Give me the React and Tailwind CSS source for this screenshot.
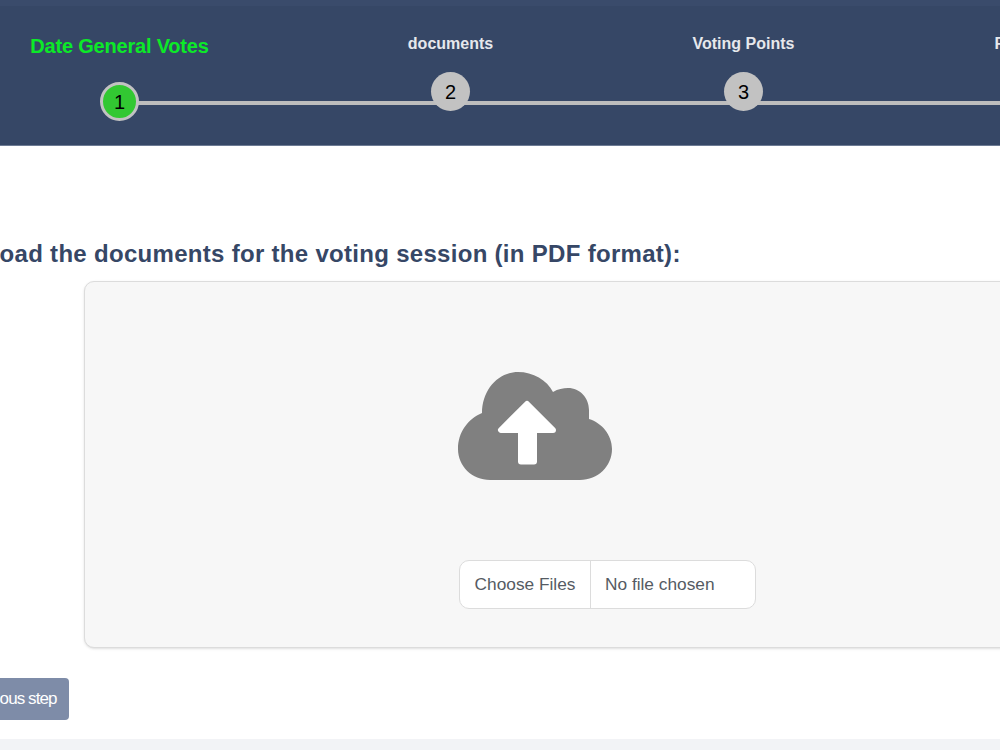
import React from 'react';

const steps = [
  { n: 2, label: 'documents' },
  { n: 3, label: 'Voting Points' },
  { n: 4, label: 'Final Votes' },
];

const CloudIcon = () => (
  <svg width="154" height="108" viewBox="0 0 154 108" aria-hidden="true">
    <path
      fill="#808080"
      d="M32 108C14 108 0 94 0 77C0 60 10 47 24 41C24 18 40 0 60 0C75 0 89 8 95 20C100 17 105 16 110 16C122 16 131 26 131 38L131 47C144 51 154 63 154 77C154 94 140 108 122 108Z"
    />
    <path
      fill="#ffffff"
      stroke="#ffffff"
      strokeWidth="6"
      strokeLinejoin="round"
      d="M69 32L43 58L63 58L63 89.5L76 89.5L76 58L95 58Z"
    />
  </svg>
);

const App = () => {
  return (
    <div className="w-[1000px] h-[750px] overflow-hidden bg-white font-['Liberation_Sans',Arial,sans-serif]">
      <header className="relative h-[146px] bg-[#364766] border-t-[6px] border-[#3a4b6b] border-b border-b-[#6d7b94]">
        <div className="absolute left-[120px] top-[95px] h-1 w-[880px] bg-[#bdbdbd]"></div>
        <div className="relative flex w-[1300px]">
          <div className="flex w-[304px] shrink-0 flex-col items-center">
            <div className="-ml-[65px] flex flex-col items-center">
              <span className="mt-[28px] text-[20px] leading-6 font-bold tracking-[-0.2px] text-[#0ce928]">
                Date General Votes
              </span>
              <span className="mt-[24px] flex h-[39px] w-[39px] items-center justify-center rounded-full border-[3px] border-[#c2c2c2] bg-[#32c832] text-[20px] text-black">
                1
              </span>
            </div>
          </div>
          {steps.map((step) => (
            <div key={step.n} className="flex w-[293px] shrink-0 flex-col items-center">
              <span className="mt-[28px] text-[16px] leading-5 font-bold text-[#e6e8ec]">{step.label}</span>
              <span className="mt-[18px] flex h-[39px] w-[39px] items-center justify-center rounded-full bg-[#c2c2c2] text-[20px] text-black">
                {step.n}
              </span>
            </div>
          ))}
        </div>
      </header>

      <main>
        <h2 className="mt-[94px] -ml-[40px] whitespace-nowrap text-[24px] leading-7 font-bold tracking-[0.3px] text-[#364766]">
          Upload the documents for the voting session (in PDF format):
        </h2>
        <div className="mt-[13px] ml-[84px] h-[367px] w-[1000px] rounded-[10px] border border-[#dcdcdc] bg-[#f7f7f7] shadow-sm">
          <div className="flex w-[900px] flex-col items-center pt-[90px]">
            <CloudIcon />
            <div className="mt-[80px] ml-[145px] flex h-[49px] w-[297px] items-center rounded-[10px] border border-[#dcdcdc] bg-white text-[17.3px] text-[#555b63]">
              <span className="flex h-full w-[131px] items-center justify-center border-r border-[#dcdcdc]">Choose Files</span>
              <span className="pl-[14px]">No file chosen</span>
            </div>
          </div>
        </div>
        <button className="mt-[30px] -ml-[47px] block h-[42px] w-[116px] rounded-[4px] bg-[#7e8ca8] text-[17px] tracking-[-0.9px] whitespace-nowrap text-white">
          Previous step
        </button>
      </main>

      <footer className="mt-[19px] h-[20px] bg-[#f2f3f6]"></footer>
    </div>
  );
};

export default App;
